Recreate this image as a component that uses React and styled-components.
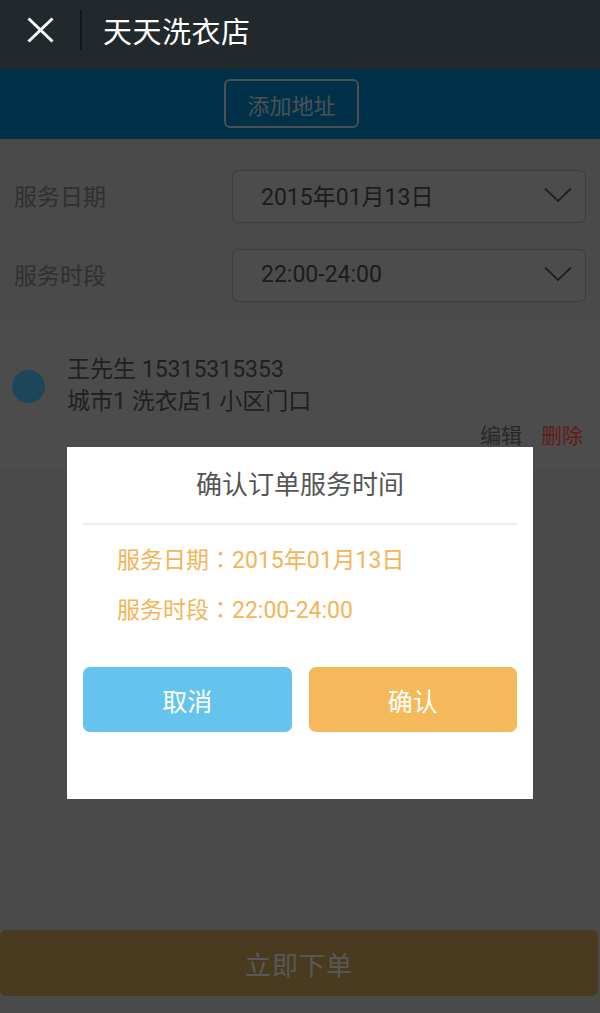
import React from "react";
import styled, { createGlobalStyle } from "styled-components";

const GlobalStyle = createGlobalStyle`
  html, body { margin: 0; padding: 0; background: #b9b9b9; }
  body { font-family: Roboto, "Noto Sans CJK SC", "Noto Sans", sans-serif; }
  * { box-sizing: border-box; }
`;

const Page = styled.div`
  position: relative;
  width: 600px;
  height: 1013px;
  overflow: hidden;
  display: flex;
  flex-direction: column;
  background: #b9b9b9;
`;

const Header = styled.header`
  height: 69px;
  flex: none;
  display: flex;
  align-items: center;
  padding-bottom: 10px;
  background: #22292c;
`;

const CloseButton = styled.div`
  width: 80px;
  display: flex;
  justify-content: center;
  align-items: center;
`;

const HeaderDivider = styled.div`
  width: 2px;
  height: 40px;
  background: #13171a;
`;

const Title = styled.h1`
  margin: 0 0 0 21px;
  font-size: 29px;
  font-weight: 400;
  color: #ffffff;
  letter-spacing: 0.5px;
`;

const Band = styled.div`
  height: 70px;
  flex: none;
  display: flex;
  justify-content: flex-start;
  padding: 10px 0 0 224px;
  background: #007ab6;
`;

const OutlineButton = styled.div`
  width: 135px;
  height: 49px;
  border: 2px solid #b8c8d2;
  border-radius: 6px;
  display: flex;
  align-items: center;
  justify-content: center;
  font-size: 22px;
  color: #bccbd4;
`;

const Form = styled.div`
  display: flex;
  flex-direction: column;
  gap: 26px;
  padding: 31px 14px 20px 14px;
`;

const FormRow = styled.div`
  display: flex;
  align-items: center;
`;

const Label = styled.div`
  width: 218px;
  font-size: 23px;
  color: #787878;
  padding-bottom: 4px;
`;

const Select = styled.div`
  flex: 1;
  height: 53px;
  display: flex;
  align-items: center;
  justify-content: space-between;
  padding: 0 13px 3px 28px;
  border: 1.5px solid #979797;
  border-radius: 7px;
  background: #bfbfbf;
  font-size: 23px;
  color: #464646;
`;

const Card = styled.div`
  display: flex;
  flex-direction: column;
  padding: 32px 17px 20px 12px;
  background: #bfbfbf;
`;

const InfoRow = styled.div`
  display: flex;
  align-items: center;
`;

const Dot = styled.div`
  width: 33px;
  height: 33px;
  border-radius: 50%;
  background: #4ab0e0;
  margin-right: 22px;
`;

const InfoText = styled.div`
  font-size: 23px;
  line-height: 32px;
  color: #505050;
`;

const Actions = styled.div`
  display: flex;
  justify-content: flex-end;
  gap: 19px;
  height: 30px;
  align-items: center;
  margin-top: 1px;
`;

const ActionLink = styled.span`
  font-size: 21px;
  color: ${(p) => (p.$danger ? "#f04848" : "#646464")};
`;

const Spacer = styled.div`
  flex: 1;
`;

const SubmitButton = styled.div`
  width: 598px;
  height: 66px;
  margin-bottom: 17px;
  border-radius: 6px;
  display: flex;
  align-items: center;
  justify-content: center;
  background: #ba924e;
  font-size: 26px;
  color: #dcdcdc;
  letter-spacing: 1px;
`;

const Overlay = styled.div`
  position: absolute;
  top: 69px;
  left: 0;
  right: 0;
  bottom: 0;
  background: rgba(0, 0, 0, 0.6);
  display: flex;
  flex-direction: column;
  align-items: center;
  padding-top: 378px;
`;

const Dialog = styled.div`
  width: 466px;
  height: 352px;
  background: #ffffff;
  padding: 0 16px;
  display: flex;
  flex-direction: column;
`;

const DialogTitle = styled.div`
  height: 76px;
  line-height: 76px;
  text-align: center;
  font-size: 26px;
  color: #555555;
`;

const DialogDivider = styled.div`
  height: 2px;
  background: #ececec;
`;

const DialogBody = styled.div`
  padding: 8px 0 0 34px;
`;

const DialogLine = styled.div`
  height: 50px;
  line-height: 50px;
  font-size: 23px;
  color: #f4b457;
`;

const Colon = styled.span`
  font-family: "Noto Sans CJK TC", "Noto Sans CJK SC", sans-serif;
`;

const DialogButtons = styled.div`
  display: flex;
  gap: 17px;
  margin-top: 34px;
`;

const DialogButton = styled.div`
  flex: 1;
  height: 65px;
  border-radius: 7px;
  display: flex;
  align-items: center;
  justify-content: center;
  font-size: 25px;
  color: #ffffff;
  background: ${(p) => (p.$primary ? "#f5b95b" : "#64c4ee")};
`;

const Chevron = () => (
  <svg width="28" height="16" viewBox="0 0 28 16" fill="none">
    <polyline points="1,1.5 14,14 27,1.5" stroke="#505050" strokeWidth="1.8" />
  </svg>
);

const CloseIcon = () => (
  <svg width="27" height="26" viewBox="0 0 27 26" fill="none">
    <line x1="1.5" y1="1.5" x2="25.5" y2="24.5" stroke="#ffffff" strokeWidth="3" />
    <line x1="25.5" y1="1.5" x2="1.5" y2="24.5" stroke="#ffffff" strokeWidth="3" />
  </svg>
);

export default function App() {
  return (
    <>
      <GlobalStyle />
      <Page>
        <Header>
          <CloseButton>
            <CloseIcon />
          </CloseButton>
          <HeaderDivider />
          <Title>天天洗衣店</Title>
        </Header>
        <Band>
          <OutlineButton>添加地址</OutlineButton>
        </Band>
        <Form>
          <FormRow>
            <Label>服务日期</Label>
            <Select>
              <span>2015年01月13日</span>
              <Chevron />
            </Select>
          </FormRow>
          <FormRow>
            <Label>服务时段</Label>
            <Select>
              <span>22:00-24:00</span>
              <Chevron />
            </Select>
          </FormRow>
        </Form>
        <Card>
          <InfoRow>
            <Dot />
            <InfoText>
              <div>王先生 15315315353</div>
              <div>城市1 洗衣店1 小区门口</div>
            </InfoText>
          </InfoRow>
          <Actions>
            <ActionLink>编辑</ActionLink>
            <ActionLink $danger>删除</ActionLink>
          </Actions>
        </Card>
        <Spacer />
        <SubmitButton>立即下单</SubmitButton>
        <Overlay>
          <Dialog>
            <DialogTitle>确认订单服务时间</DialogTitle>
            <DialogDivider />
            <DialogBody>
              <DialogLine>服务日期<Colon>：</Colon>2015年01月13日</DialogLine>
              <DialogLine>服务时段<Colon>：</Colon>22:00-24:00</DialogLine>
            </DialogBody>
            <DialogButtons>
              <DialogButton>取消</DialogButton>
              <DialogButton $primary>确认</DialogButton>
            </DialogButtons>
          </Dialog>
        </Overlay>
      </Page>
    </>
  );
}
